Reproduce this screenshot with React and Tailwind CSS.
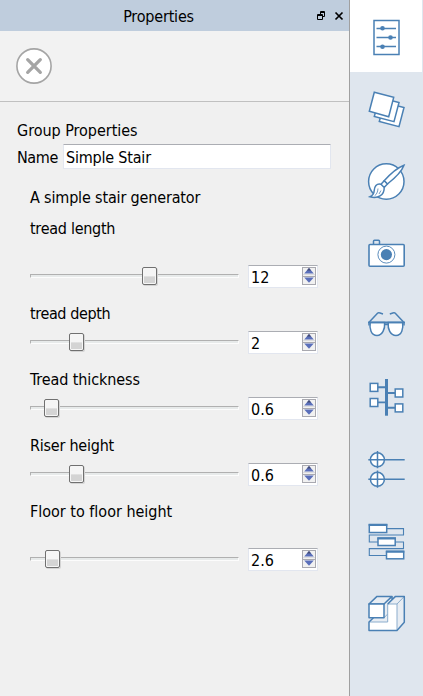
const BLUE = '#4a80b4';

const sliders = [
  { label: 'tread length', value: '12', thumb: 112, tall: true, tracking: 'tracking-[-0.28px]' },
  { label: 'tread depth', value: '2', thumb: 39, tracking: 'tracking-[-0.38px]' },
  { label: 'Tread thickness', value: '0.6', thumb: 14, tracking: 'tracking-[-0.1px]' },
  { label: 'Riser height', value: '0.6', thumb: 39, tracking: 'tracking-[-0.23px]' },
  { label: 'Floor to floor height', value: '2.6', thumb: 15, tall: true, tracking: 'tracking-[-0.01px]' },
];

function SpinBox({ value }) {
  return (
    <div className="flex h-[23px] w-[70px] items-center justify-between border border-[#e2e6ef] border-t-[#abadb3] bg-white pl-0.5 pr-px">
      <span className="pt-0.5 leading-5 tracking-[0px]">{value}</span>
      <svg width="14" height="19" viewBox="0 0 14 19">
        <rect x=".5" y=".5" width="13" height="17" fill="#f1f1f1" stroke="#a9a9b0" />
        <path d="M1 7.5H13" stroke="#dcdcde" />
        <path d="M1 9.5H13" stroke="#a9a9b0" />
        <path d="M2.2 6.5 7 1 11.8 6.5Z" fill="#5a6fba" />
        <path d="M4.8 3.5 7 1 9.2 3.5Z" fill="#434a72" />
        <path d="M2.2 10.5H11.8L7 15.7Z" fill="#5a6fba" />
      </svg>
    </div>
  );
}

function Slider({ thumb }) {
  return (
    <div className="relative h-[23px] w-[209px] pt-[9px]">
      <div className="h-1 border border-[#fcfcfc] border-l-[#b0b0b0] border-t-[#b0b0b0] bg-[#e7eaea]" />
      <div
        className="absolute top-[2px] h-[18px] w-[15px] rounded-[2px] border border-[#707070] bg-linear-to-b from-[#f5f5f5] from-50% to-[#d4d4d4] to-55% shadow-[inset_0_0_0_1px_#f6f6f6,1px_1px_0_#d4d4d4]"
        style={{ left: thumb }}
      />
    </div>
  );
}

const icons = [
  <g key="0">
    <rect x="24" y="20.5" width="25" height="34" fill="#fff" strokeWidth="1.5" />
    <path d="M26.5 28.4H46M26.5 37.5H46M26.5 46.6H46" />
    <g fill={BLUE} stroke="none">
      <circle cx="32.5" cy="28.3" r="2.3" />
      <circle cx="40.5" cy="37.5" r="2.3" />
      <circle cx="32.5" cy="46.7" r="2.3" />
    </g>
  </g>,
  <g key="1" fill="#fff">
    <path d="M34.5 30.5 54 35.5 49 54.7 29.3 49.5Z" />
    <path d="M29.5 25.5 49 30.5 44 49.7 24.3 44.5Z" />
    <path d="M24.3 20.2 43.7 25.4 38.7 44.7 19.3 39.3Z" />
  </g>,
  <g key="2" fill="#fff">
    <circle cx="36.3" cy="37.5" r="17.7" />
    <path d="M54 21.2C48 23.5 41 29 34.2 36.8L37.4 40C45 34 51.5 28 54 21.2Z" />
    <path d="M34.2 36.8 31 40.2 34.2 43.5 37.4 40ZM31 40.2C26.5 38.8 24.3 43 24.2 46.5 24 50 22.5 51.7 20 52.8 27.5 55 34.5 51.5 34.2 43.5" />
    <path d="M28 44.5C27.8 48 26.5 50.5 24.5 52M31 46.5 29 50" strokeWidth=".8" />
  </g>,
  <g key="3" fill="#fff">
    <path d="M23.5 29V25.2Q23.5 24.2 24.5 24.2H28.5Q29.5 24.2 29.5 25.2V29" fill="none" />
    <rect x="19" y="28.5" width="35.2" height="21.7" rx="1" strokeWidth="1.6" />
    <circle cx="36.4" cy="38.6" r="8.5" strokeWidth=".9" />
    <circle cx="36.4" cy="38.6" r="5.6" fill={BLUE} stroke="none" />
  </g>,
  <g key="4" fill="none">
    <path d="M20.2 34.5H34.6C35.2 41 32.4 47.5 27 47.5 21 47.5 19.3 40.5 20.2 34.5ZM38.2 34.5H52.6C53.5 40.5 51.8 47.5 46 47.5 40.2 47.5 37.6 41 38.2 34.5Z" fill="#fff" />
    <path d="M18 34.3H55M34.8 36.3H38" strokeWidth="1.7" />
    <path d="M19.3 34 27.5 25.2Q28.3 24.4 29.3 24.8L33 26M53.5 34 45.3 25.2Q44.5 24.4 43.5 24.8L39.8 26M19 34V37.5M54 34V37.5" />
  </g>,
  <g key="5" fill="#fff">
    <path d="M28 27.3H36M28 42.4H36M37 33H45M37 47.8H45" strokeWidth="1.9" />
    <path d="M36.5 19V55.7" strokeWidth="3" />
    <rect x="20.2" y="23.4" width="7.6" height="8" />
    <rect x="20.2" y="38.5" width="7.6" height="8" />
    <rect x="45.2" y="29" width="7.6" height="8" />
    <rect x="45.2" y="43.9" width="7.6" height="8" />
  </g>,
  <g key="6" fill="#fff">
    <circle cx="27.4" cy="27.8" r="7" />
    <circle cx="27.4" cy="47.3" r="7" />
    <path d="M18.3 27.8H54.7M18.3 47.3H54.7M27.5 19V36.3M27.5 38.6V55.7" />
  </g>,
  <g key="7" fill="none">
    <path d="M37 24.6H53.5V31H19.3V38H28M45 38H53.5V44.6H19.3V51.5H36.5" strokeWidth="1.1" />
    <g fill="#fff">
      <rect x="19.3" y="20.5" width="17.4" height="8" />
      <rect x="28" y="34" width="17.2" height="7.5" />
      <rect x="36.5" y="47.3" width="17.2" height="7.5" />
    </g>
    <path d="M18.7 21H37.3M27.4 34.4H45.8M35.9 47.7H54.3" strokeWidth="2" />
  </g>,
  <g key="8" fill="#fff" strokeLinejoin="round">
    <path d="M19 46H37.7V28H47V54.4H19Z" stroke="none" />
    <path d="M19 46 23.5 41.8H34L37.7 38V46ZM34 28 42 20.6V24L37.7 28V38L34 41.8ZM37.7 28 45.5 20.4H54.3L47 28ZM47 28 54.3 20.4V46.3L47 54.4Z" fill="#e8edf3" stroke="none" />
    <path d="M19 46H37.7V28H47V54.4M47 28 54.3 20.4M37.7 38 34 41.8" fill="none" stroke="#8cadcd" strokeWidth="1" />
    <path d="M19 28 27 20.4H42L34 28Z" fill="#e8edf3" />
    <path d="M19 28H34V41.8H19Z" />
    <path d="M23.5 41.8 19 46V54.4H47L54.3 46.3V20.4H45.5L37.7 28M42 20.4V23.5" fill="none" />
  </g>,
];

export default function App() {
  return (
    <div className="flex h-[696px] w-[423px] overflow-hidden bg-[#f0f0f0] font-['DejaVu_Sans_Condensed','DejaVu_Sans',sans-serif] text-[16px] leading-5 text-black">
      <main className="w-[350px] shrink-0 border-r border-[#a0a0a0]">
        <header className="flex h-[31px] items-center bg-[#bfcddd] pr-[5px]">
          <h1 className="w-[317px] whitespace-nowrap pt-[3px] text-center tracking-[-0.2px]">Properties</h1>
          <svg className="shrink-0" width="27" height="10" viewBox="0 0 27 10" fill="none" stroke="#000">
            <path d="M3.5 3V.5H7.5V5.5H6M3 1.5H8M.5 3.5H5.5V8.5H.5ZM0 4.5H6" />
            <path d="M18.5 1.5 25.5 8.5M25.5 1.5 18.5 8.5" strokeWidth="1.7" />
          </svg>
        </header>
        <div className="flex h-[71px] items-center border-b border-[#c0c0c0] bg-[#f2f2f2] pl-4">
          <svg width="36" height="36" viewBox="0 0 36 36" stroke="#a5a5a5" fill="#fff">
            <circle cx="18" cy="18" r="17.1" strokeWidth="1.6" />
            <path d="M11.7 11.7 24.3 24.3M24.3 11.7 11.7 24.3" strokeWidth="3.3" strokeLinecap="round" />
          </svg>
        </div>
        <section className="whitespace-nowrap pl-[17px] pt-[19px]">
          <h2 className="tracking-[-0.03px]">Group Properties</h2>
          <div className="mt-[3px] flex items-center">
            <span className="w-[46px] pt-0.5 tracking-[-0.4px]">Name</span>
            <div className="h-[25px] w-[268px] rounded-[1px] border border-[#e2e6ef] border-t-[#abadb3] bg-white pl-0.5 pt-[3px] tracking-[-0.2px]">Simple Stair</div>
          </div>
          <div className="pl-[13px]">
            <p className="mb-[11px] mt-[19px] tracking-[-0.16px]">A simple stair generator</p>
            {sliders.map((s) => (
              <div key={s.label} className="mb-[15px]">
                <div className={`${s.tall ? 'mb-[26px]' : 'mb-[7px]'} ${s.tracking}`}>{s.label}</div>
                <div className="-mb-px ml-0 flex h-6 gap-[9px]">
                  <Slider thumb={s.thumb} />
                  <SpinBox value={s.value} />
                </div>
                <div className="h-px" />
              </div>
            ))}
          </div>
        </section>
      </main>
      <nav className="flex w-[73px] flex-col bg-[#dfe6ee]">
        {icons.map((icon, i) => (
          <button key={i} className={i === 0 ? 'mr-px h-[72px] bg-white' : 'h-[72px]'}>
            <svg width="73" height="72" viewBox="0 0 73 72" stroke={BLUE} strokeWidth="1.5">{icon}</svg>
          </button>
        ))}
      </nav>
    </div>
  );
}
